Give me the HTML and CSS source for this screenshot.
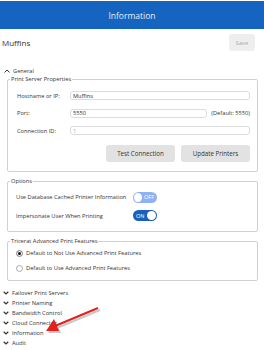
FILE: index.html
```html
<!DOCTYPE html>
<html>
  <head>
    <title>Information</title>
    <link rel="stylesheet" href="styles.css">
  </head>
  <body>
    <header class="appbar">Information</header>

    <div class="titlebar">
      <span class="server-name">Muffins</span>
      <button class="btn-save" disabled>Save</button>
    </div>

    <main class="content">
      <div class="section-head">
        <svg class="chev" width="6" height="4" viewBox="0 0 6 4"><path d="M0.5 3.5 L3 1 L5.5 3.5" fill="none" stroke="#333" stroke-width="1"/></svg>
        General
      </div>

      <fieldset class="group group-server">
        <legend>Print Server Properties</legend>
        <div class="form">
          <label>Hostname or IP:</label>
          <input class="wide" type="text" value="Muffins">
          <label>Port:</label>
          <input type="text" value="5550">
          <span class="hint">(Default: 5550)</span>
          <label>Connection ID:</label>
          <input class="wide muted" type="text" value="1" readonly>
        </div>
        <div class="actions">
          <button class="btn">Test Connection</button>
          <button class="btn">Update Printers</button>
        </div>
      </fieldset>

      <fieldset class="group group-options">
        <legend>Options</legend>
        <div class="option">
          <span>Use Database Cached Printer Information</span>
          <span class="toggle off"><i></i><b>OFF</b></span>
        </div>
        <div class="option">
          <span>Impersonate User When Printing</span>
          <span class="toggle on"><b>ON</b><i></i></span>
        </div>
      </fieldset>

      <fieldset class="group group-radio">
        <legend>Tricerat Advanced Print Features</legend>
        <label class="radio"><span class="dot checked"></span>Default to Not Use Advanced Print Features</label>
        <label class="radio"><span class="dot"></span>Default to Use Advanced Print Features</label>
      </fieldset>
    </main>

    <ul class="sections">
      <li><svg class="chev" width="6" height="4" viewBox="0 0 6 4"><path d="M0.7 0.8 L3 3 L5.3 0.8" fill="none" stroke="#333" stroke-width="1.2"/></svg>Failover Print Servers</li>
      <li><svg class="chev" width="6" height="4" viewBox="0 0 6 4"><path d="M0.7 0.8 L3 3 L5.3 0.8" fill="none" stroke="#333" stroke-width="1.2"/></svg>Printer Naming</li>
      <li><svg class="chev" width="6" height="4" viewBox="0 0 6 4"><path d="M0.7 0.8 L3 3 L5.3 0.8" fill="none" stroke="#333" stroke-width="1.2"/></svg>Bandwidth Control</li>
      <li><svg class="chev" width="6" height="4" viewBox="0 0 6 4"><path d="M0.7 0.8 L3 3 L5.3 0.8" fill="none" stroke="#333" stroke-width="1.2"/></svg>Cloud Connector</li>
      <li><svg class="chev" width="6" height="4" viewBox="0 0 6 4"><path d="M0.7 0.8 L3 3 L5.3 0.8" fill="none" stroke="#333" stroke-width="1.2"/></svg>Information</li>
      <li><svg class="chev" width="6" height="4" viewBox="0 0 6 4"><path d="M0.7 0.8 L3 3 L5.3 0.8" fill="none" stroke="#333" stroke-width="1.2"/></svg>Audit</li>
    </ul>

    <!-- annotation arrow laid over the list -->
    <svg class="arrow" width="66" height="40" viewBox="0 0 66 40">
      <g transform="translate(2 2)" fill="#888" stroke="#888" opacity="0.45">
        <line x1="58" y1="8" x2="15" y2="26" stroke-width="2"/>
        <polygon points="6,31 14,19 19,31" stroke="none"/>
      </g>
      <g fill="#e3201b" stroke="#e3201b">
        <line x1="58" y1="8" x2="15" y2="26" stroke-width="2"/>
        <polygon points="6,31 14,19 19,31" stroke="none"/>
      </g>
    </svg>
  </body>
</html>
```

FILE: styles.css
```css
body
{
  margin: 0;
  width: 264px;
  font-family: "Open Sans", "Noto Sans", sans-serif;
  color: #333;
  position: relative;
}

.appbar
{
  margin-top: 1px;
  height: 28px;
  background-color: #1565c0;
  color: #e4ecf8;
  font-size: 8.5px;
  display: flex;
  align-items: center;
  justify-content: center;
}

.titlebar
{
  display: flex;
  align-items: center;
  justify-content: space-between;
  padding: 5px 9px 0 2px;
  height: 17px;
}

.server-name { font-size: 8px; color: #333; }

.btn-save
{
  width: 26px;
  height: 17px;
  border: none;
  border-radius: 3px;
  background-color: #eeeeee;
  color: #aaa;
  font: 5.7px "Open Sans", sans-serif;
  padding: 0;
}

.content { padding: 0 6px 0 7px; }

.section-head
{
  font-size: 5.7px;
  display: flex;
  align-items: center;
  gap: 3px;
  margin: 16px 0 0 -3px;
  height: 8px;
}

.chev { flex: none; }

.group
{
  margin: 5px 0 0 0;
  border: 1px solid #d0d0d0;
  border-radius: 2px;
  padding: 0 7px 0 9px;
  font-size: 5.7px;
  line-height: 8px;
}

.group legend
{
  padding: 0 1px;
  margin-left: -7px;
  font-size: 5.7px;
  line-height: 8px;
  color: #333;
}

.group-server { margin-top: 0; padding-top: 8px; padding-bottom: 9px; }

.form
{
  display: grid;
  grid-template-columns: 49px 1fr auto;
  column-gap: 4px;
  row-gap: 8.5px;
  align-items: center;
}

.form input
{
  height: 9px;
  box-sizing: border-box;
  border: 1px solid #dcdcdc;
  border-radius: 3px;
  padding: 0 2px;
  font: 5.7px "Open Sans", sans-serif;
  color: #333;
  min-width: 0;
  margin: 0;
}

.form input.wide { grid-column: 2 / 4; }
.form input.muted { color: #aaa; }

.actions
{
  display: flex;
  justify-content: flex-end;
  gap: 6px;
  margin-top: 10px;
}

.btn
{
  height: 17px;
  border: none;
  border-radius: 3px;
  background-color: #e2e2e2;
  color: #333;
  font: 6.2px "Open Sans", sans-serif;
  padding: 0;
  width: 69px;
}

.group-options { padding-top: 3px; padding-bottom: 6px; }

.option
{
  display: grid;
  grid-template-columns: 117px auto;
  align-items: center;
  height: 18.5px;
  margin-left: -1px;
}

.toggle
{
  width: 24px;
  height: 11px;
  border-radius: 6px;
  display: flex;
  align-items: center;
  justify-content: space-between;
  padding: 0 1px;
  box-sizing: border-box;
  font-size: 5.5px;
}

.toggle i
{
  width: 9px;
  height: 9px;
  border-radius: 50%;
  background-color: #fff;
}

.toggle b { font-weight: normal; color: #fff; padding: 0 2px; }

.toggle.off { background-color: #8db1f2; }
.toggle.on  { background-color: #1a5fb8; }

.group-radio { padding-top: 0.5px; padding-bottom: 4px; }

.radio
{
  display: flex;
  align-items: center;
  gap: 3px;
  height: 15px;
  margin-left: -1px;
}

.dot
{
  width: 7px;
  height: 7px;
  border-radius: 50%;
  border: 1px solid #aaa;
  box-sizing: border-box;
  background-color: #fff;
}

.dot.checked
{
  background-color: #111;
  box-shadow: inset 0 0 0 1px #fff;
}

.sections
{
  list-style: none;
  margin: 7px 0 0 3px;
  padding: 0;
  font-size: 5.7px;
}

.sections li
{
  height: 10px;
  display: flex;
  align-items: center;
  gap: 3px;
}

.arrow
{
  position: absolute;
  left: 40px;
  top: 300px;
}
```
